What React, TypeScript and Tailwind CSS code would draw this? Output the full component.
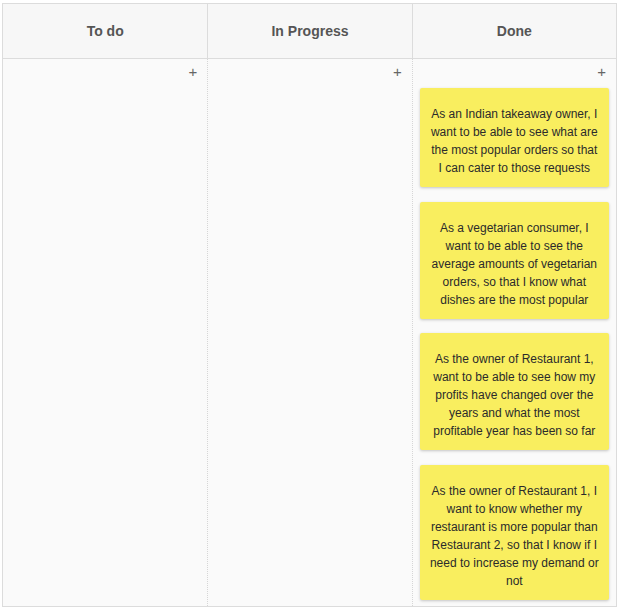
const columns: { title: string; cards: string[] }[] = [
  { title: 'To do', cards: [] },
  { title: 'In Progress', cards: [] },
  {
    title: 'Done',
    cards: [
      'As an Indian takeaway owner, I want to be able to see what are the most popular orders so that I can cater to those requests',
      'As a vegetarian consumer, I want to be able to see the average amounts of vegetarian orders, so that I know what dishes are the most popular',
      'As the owner of Restaurant 1, want to be able to see how my profits have changed over the years and what the most profitable year has been so far',
      'As the owner of Restaurant 1, I want to know whether my restaurant is more popular than Restaurant 2, so that I know if I need to increase my demand or not',
    ],
  },
]

function Card({ text }: { text: string }) {
  return (
    <div className="rounded-[2px] bg-[#f9ee5f] px-[9px] pb-[10px] pt-[17px] text-center text-[12px] leading-[18px] text-[#2b2b2b] shadow-[0_1px_3px_rgba(0,0,0,0.22)]">
      {text}
    </div>
  )
}

export default function App() {
  return (
    <div className="min-h-[608px] bg-white pl-[2px] pt-[3px] font-['Liberation_Sans',Arial,sans-serif]">
      <div className="flex h-[604px] w-[615px] flex-col border border-[#dcdcdc] bg-[#fafafa]">
        <div className="grid h-[55px] shrink-0 grid-cols-3 border-b border-[#dcdcdc] bg-[#f7f7f7]">
          {columns.map((col, i) => (
            <div
              key={col.title}
              className={
                'flex items-center justify-center text-[14px] font-bold text-[#555]' +
                (i > 0 ? ' border-l border-[#dcdcdc]' : '')
              }
            >
              {col.title}
            </div>
          ))}
        </div>
        <div className="grid flex-1 grid-cols-3">
          {columns.map((col, i) => (
            <div
              key={col.title}
              className={'flex flex-col' + (i > 0 ? ' border-l border-dotted border-[#d6d6d6]' : '')}
            >
              <div className="flex h-[29px] items-start justify-end pr-[10px] pt-[5px] text-[15px] leading-none text-[#666]">
                +
              </div>
              <div className="flex flex-col gap-[14.5px] px-[7px]">
                {col.cards.map((c) => (
                  <Card key={c} text={c} />
                ))}
              </div>
            </div>
          ))}
        </div>
      </div>
    </div>
  )
}
